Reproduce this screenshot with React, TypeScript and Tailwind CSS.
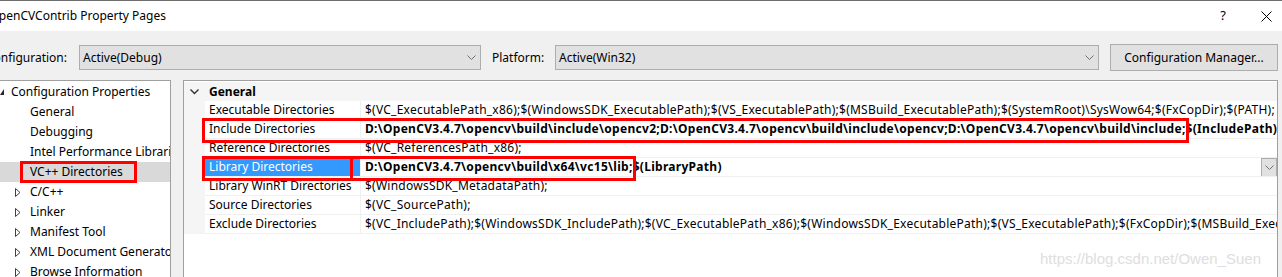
const UI = "font-['Noto_Sans','Liberation_Sans',sans-serif]";

type TreeItem = { label: string; kind: 'open' | 'leaf' | 'closed'; selected?: boolean };

const TREE: TreeItem[] = [
  { label: 'Configuration Properties', kind: 'open' },
  { label: 'General', kind: 'leaf' },
  { label: 'Debugging', kind: 'leaf' },
  { label: 'Intel Performance Libraries', kind: 'leaf' },
  { label: 'VC++ Directories', kind: 'leaf', selected: true },
  { label: 'C/C++', kind: 'closed' },
  { label: 'Linker', kind: 'closed' },
  { label: 'Manifest Tool', kind: 'closed' },
  { label: 'XML Document Generator', kind: 'closed' },
  { label: 'Browse Information', kind: 'closed' },
];

type Prop = { name: string; value: string; bold?: boolean; selected?: boolean };

const PROPS: Prop[] = [
  {
    name: 'Executable Directories',
    value:
      '$(VC_ExecutablePath_x86);$(WindowsSDK_ExecutablePath);$(VS_ExecutablePath);$(MSBuild_ExecutablePath);$(SystemRoot)\\SysWow64;$(FxCopDir);$(PATH);',
  },
  {
    name: 'Include Directories',
    value:
      'D:\\OpenCV3.4.7\\opencv\\build\\include\\opencv2;D:\\OpenCV3.4.7\\opencv\\build\\include\\opencv;D:\\OpenCV3.4.7\\opencv\\build\\include;$(IncludePath)',
    bold: true,
  },
  { name: 'Reference Directories', value: '$(VC_ReferencesPath_x86);' },
  {
    name: 'Library Directories',
    value: 'D:\\OpenCV3.4.7\\opencv\\build\\x64\\vc15\\lib;$(LibraryPath)',
    bold: true,
    selected: true,
  },
  { name: 'Library WinRT Directories', value: '$(WindowsSDK_MetadataPath);' },
  { name: 'Source Directories', value: '$(VC_SourcePath);' },
  {
    name: 'Exclude Directories',
    value:
      '$(VC_IncludePath);$(WindowsSDK_IncludePath);$(VC_ExecutablePath_x86);$(WindowsSDK_ExecutablePath);$(VS_ExecutablePath);$(FxCopDir);$(MSBuild_ExecutablePath);$(VC_ExecutablePath_x86)',
  },
];

const Chevron = ({ className = '' }: { className?: string }) => (
  <svg width="9" height="5" viewBox="0 0 9 5" className={className}>
    <path d="M0.5 0.5 L4.5 4.5 L8.5 0.5" fill="none" stroke="#707070" strokeWidth="1" />
  </svg>
);

const Combo = ({ text, width }: { text: string; width: string }) => (
  <div
    className={`${width} h-[25px] shrink-0 flex items-center justify-between border border-[#adadad] bg-[#e1e1e1] pl-[3px] pr-[4px] text-[12px] text-black`}
  >
    <span>{text}</span>
    <Chevron />
  </div>
);

function TreeRow({ item }: { item: TreeItem }) {
  return (
    <div
      className={`h-[20px] flex items-center whitespace-nowrap text-[12px] text-black ${
        item.selected ? 'bg-[#d9d9d9]' : ''
      }`}
    >
      {item.kind === 'open' && (
        <>
          <svg width="4" height="6" viewBox="0 0 4 6" className="shrink-0">
            <path d="M4 0 L4 6 L0 6 Z" fill="#262626" />
          </svg>
          <span className="ml-[7px]">{item.label}</span>
        </>
      )}
      {item.kind === 'leaf' && <span className="ml-[30px]">{item.label}</span>}
      {item.kind === 'closed' && (
        <>
          <svg width="6" height="9" viewBox="0 0 6 9" className="ml-[15px] shrink-0">
            <path d="M0.5 0.5 L5 4.5 L0.5 8.5 Z" fill="none" stroke="#404040" strokeWidth="1" />
          </svg>
          <span className="ml-[9px]">{item.label}</span>
        </>
      )}
    </div>
  );
}

function PropRow({ p }: { p: Prop }) {
  return (
    <div className="grid grid-cols-[21px_156px_1fr] h-[19px] text-[12px]">
      <div className="bg-[#f5f5f5]" />
      <div
        className={`flex items-center pl-[4px] whitespace-nowrap overflow-hidden border-r border-b border-[#f0f0f0] ${
          p.selected ? 'bg-[#3399ff] text-white' : 'text-black'
        }`}
      >
        {p.name}
      </div>
      <div className="flex items-center border-b border-[#f0f0f0] overflow-hidden">
        <span
          className={`flex-1 pl-[4px] whitespace-nowrap overflow-hidden text-black ${
            p.bold ? 'font-bold tracking-[0.29px]' : 'tracking-[0.24px]'
          }`}
        >
          {p.value}
        </span>
        {p.selected && (
          <div className="w-[16px] h-[19px] shrink-0 flex items-center justify-center border border-[#adadad] bg-[#e1e1e1]">
            <Chevron />
          </div>
        )}
      </div>
    </div>
  );
}

export default function App() {
  return (
    <div className={`${UI} relative w-[1282px] h-[277px] overflow-hidden bg-[#f0f0f0]`}>
      <div className="h-px bg-[#6e6e6e]" />

      {/* title bar */}
      <div className="h-[30px] bg-white flex items-center">
        <div className="w-[166px] shrink-0 flex justify-end whitespace-nowrap text-[12px] text-black">
          OpenCVContrib Property Pages
        </div>
        <div className="flex-1" />
        <span className="text-[13px] text-black mr-[35px]">?</span>
        <svg width="11" height="11" viewBox="0 0 11 11" className="mr-[10px]">
          <path d="M0.5 0.5 L10.5 10.5 M10.5 0.5 L0.5 10.5" stroke="#000" strokeWidth="1" />
        </svg>
      </div>

      {/* configuration row */}
      <div className="flex items-center h-[27px] mt-[13px] text-[12px] text-black">
        <div className="w-[79px] shrink-0 flex justify-end pr-[12px] whitespace-nowrap">Configuration:</div>
        <Combo text="Active(Debug)" width="w-[402px]" />
        <div className="ml-[11px] w-[63px] shrink-0">Platform:</div>
        <Combo text="Active(Win32)" width="w-[544px]" />
        <div className="ml-[11px] w-[168px] h-[27px] shrink-0 flex items-center justify-center border border-[#adadad] bg-[#e1e1e1]">
          Configuration Manager...
        </div>
      </div>

      {/* panels */}
      <div className="flex mt-[9px] h-[200px]">
        <div className="w-[171px] shrink-0 bg-white border-t border-r border-[#a0a0a0] pt-px overflow-hidden">
          {TREE.map((t) => (
            <TreeRow key={t.label} item={t} />
          ))}
        </div>

        <div className="ml-[12px] w-[1095px] shrink-0 bg-white border-t border-l border-r border-[#a0a0a0] pt-px overflow-hidden">
          <div className="h-[19px] flex items-center bg-[#f5f5f5] text-[12px] text-black">
            <svg width="9" height="6" viewBox="0 0 9 6" className="ml-[6px]">
              <path d="M0.5 0.5 L4.5 4.5 L8.5 0.5" fill="none" stroke="#333" strokeWidth="1.4" />
            </svg>
            <span className="ml-[10px] font-bold">General</span>
          </div>
          {PROPS.map((p) => (
            <PropRow key={p.name} p={p} />
          ))}
        </div>
      </div>

      {/* red annotation boxes */}
      <div className="absolute left-[20px] top-[161px] w-[117px] h-[22px] border-[3px] border-[#ff0000]" />
      <div className="absolute left-[202px] top-[118px] w-[987px] h-[25px] border-[3px] border-[#ff0000]" />
      <div className="absolute left-[202px] top-[156px] w-[151px] h-[25px] border-[3px] border-[#ff0000]" />
      <div className="absolute left-[350px] top-[156px] w-[286px] h-[25px] border-[3px] border-[#ff0000]" />

      {/* watermark */}
      <div className="absolute left-[1040px] top-[248px] whitespace-nowrap font-['Liberation_Sans',Arial,sans-serif] text-[15px] text-[#dedede]">
        https://blog.csdn.net/Owen_Suen
      </div>
    </div>
  );
}
